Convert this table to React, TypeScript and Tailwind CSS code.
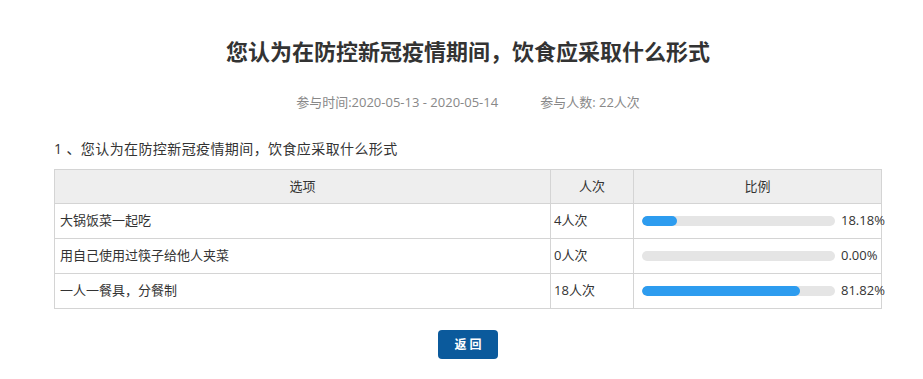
import React from 'react';

const options = [
  { label: '大锅饭菜一起吃', count: 4, pct: 18.18 },
  { label: '用自己使用过筷子给他人夹菜', count: 0, pct: 0 },
  { label: '一人一餐具，分餐制', count: 18, pct: 81.82 },
];

function Bar({ pct }: { pct: number }) {
  return (
    <div className="flex items-center">
      <div className="h-[10px] w-[193px] shrink-0 rounded-full bg-[#e5e5e5] overflow-hidden">
        <div className="h-full rounded-full bg-[#2d9cef]" style={{ width: `${pct}%` }} />
      </div>
      <span className="ml-[6px] whitespace-nowrap">{pct.toFixed(2)}%</span>
    </div>
  );
}

export default function App() {
  return (
    <div
      className="min-h-[379px] bg-white text-[#333]"
      style={{ fontFamily: '"Open Sans", "Noto Sans CJK SC", sans-serif' }}
    >
      <div className="ml-[54px] w-[828px] pt-[36px]">
        {/* Title */}
        <h1 className="text-center text-[22px] font-bold leading-[30px] text-[#333]">
          您认为在防控新冠疫情期间，饮食应采取什么形式
        </h1>

        {/* Meta */}
        <div className="mt-[27px] flex justify-center gap-[42px] text-[13px] leading-[18px] text-[#888]">
          <span>参与时间:2020-05-13 - 2020-05-14</span>
          <span>参与人数: 22人次</span>
        </div>

        {/* Question */}
        <p className="mt-[28px] text-[14px] leading-[20px] tracking-[0.4px] text-[#333]">
          1 、您认为在防控新冠疫情期间，饮食应采取什么形式
        </p>

        <table className="mt-[10px] w-full border-collapse text-[13px] text-[#333] table-fixed">
          <colgroup>
            <col className="w-[496px]" />
            <col className="w-[83px]" />
            <col />
          </colgroup>
          <thead>
            <tr className="h-[34px] bg-[#eeeeee]">
              <th className="border border-[#d4d4d4] font-normal">选项</th>
              <th className="border border-[#d4d4d4] font-normal">人次</th>
              <th className="border border-[#d4d4d4] font-normal">比例</th>
            </tr>
          </thead>
          <tbody>
            {options.map((o) => (
              <tr key={o.label} className="h-[35px]">
                <td className="border border-[#d4d4d4] px-[5px]">{o.label}</td>
                <td className="border border-[#d4d4d4] px-[3px]">{o.count}人次</td>
                <td className="border border-[#d4d4d4] pl-[8px]">
                  <Bar pct={o.pct} />
                </td>
              </tr>
            ))}
          </tbody>
        </table>

        <div className="mt-[21px] flex justify-center">
          <button className="h-[29px] w-[60px] rounded-[4px] bg-[#0b5a9c] pl-[3px] text-[12px] font-bold tracking-[3px] text-white">
            返回
          </button>
        </div>
      </div>
    </div>
  );
}
